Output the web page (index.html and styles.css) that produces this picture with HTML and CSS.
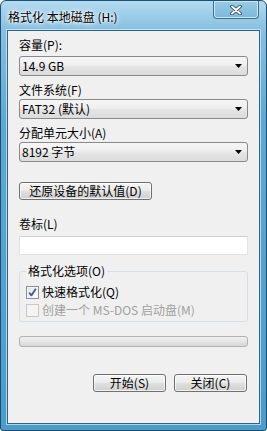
FILE: index.html
```html
<!DOCTYPE html>
<html lang="zh-CN">
<head>
<meta charset="utf-8">
<title>格式化 本地磁盘 (H:)</title>
<link rel="stylesheet" href="styles.css">
</head>
<body>
<div class="window">
  <div class="titlebar">
    <span class="title">格式化 本地磁盘 (H:)</span>
    <div class="close">
      <svg width="12" height="10" viewBox="0 0 12 10">
        <path d="M2 1.5 L10 8.5 M10 1.5 L2 8.5" stroke="#2b3f52" stroke-width="3.6" stroke-linecap="round"/>
        <path d="M2 1.5 L10 8.5 M10 1.5 L2 8.5" stroke="#ffffff" stroke-width="2" stroke-linecap="round"/>
      </svg>
    </div>
  </div>
  <div class="client">
    <div class="label">容量(P):</div>
    <div class="combo first"><span>14.9 GB</span><svg class="arrow" width="7" height="4" viewBox="0 0 7 4"><path d="M0 0 H7 L3.5 4 Z" fill="#000"/></svg></div>
    <div class="label">文件系统(F)</div>
    <div class="combo"><span>FAT32 (默认)</span><svg class="arrow" width="7" height="4" viewBox="0 0 7 4"><path d="M0 0 H7 L3.5 4 Z" fill="#000"/></svg></div>
    <div class="label">分配单元大小(A)</div>
    <div class="combo"><span>8192 字节</span><svg class="arrow" width="7" height="4" viewBox="0 0 7 4"><path d="M0 0 H7 L3.5 4 Z" fill="#000"/></svg></div>
    <div class="btn restore">还原设备的默认值(D)</div>
    <div class="label vol">卷标(L)</div>
    <div class="textbox"></div>
    <fieldset class="group">
      <legend>格式化选项(O)</legend>
      <div class="check-row first-row">
        <span class="box checked">
          <svg width="11" height="11" viewBox="0 0 11 11"><path d="M2.2 5.6 L4.4 8.4 L8.8 1.8" stroke="#3f5896" stroke-width="1.8" fill="none" stroke-linejoin="round"/></svg>
        </span>
        <span>快速格式化(Q)</span>
      </div>
      <div class="check-row disabled">
        <span class="box"></span>
        <span>创建一个 MS-DOS 启动盘(M)</span>
      </div>
    </fieldset>
    <div class="progress"></div>
    <div class="actions">
      <div class="btn action">开始(S)</div>
      <div class="btn action">关闭(C)</div>
    </div>
  </div>
</div>
</body>
</html>
```
FILE: styles.css
```css
* { box-sizing: border-box; }
body {
  margin: 0;
  font-family: "Noto Sans CJK SC", "Noto Sans", sans-serif;
  font-size: 12px;
  color: #000;
  background: #ffffff;
}
.window {
  width: 267px;
  height: 431px;
  border: 1px solid #1f4f70;
  border-radius: 6px 6px 3px 3px;
  background: linear-gradient(180deg, #b4dbf0 0px, #9ccde9 14px, #86bfe0 30px, #5ea8d3 120px, #4b9ccb 431px);
  display: flex;
  flex-direction: column;
  padding: 0 6px 6px;
}
.titlebar {
  height: 29px;
  display: flex;
  justify-content: space-between;
  align-items: flex-start;
  flex-shrink: 0;
}
.title {
  align-self: center;
  padding-left: 1px;
  line-height: 14px;
  margin-top: 2px;
  color: #000;
  text-shadow: 0 0 4px #ffffff, 0 0 6px #ffffff, 0 0 2px #ffffff;
}
.close {
  width: 46px;
  height: 18px;
  margin-right: 1px;
  border: 1px solid #3e6f8f;
  border-top: none;
  border-radius: 0 0 4px 4px;
  box-shadow: inset 0 0 0 1px #cbe6f5;
  background: linear-gradient(180deg, #9ccbe6, #7ab6da);
  display: flex;
  align-items: center;
  justify-content: center;
}
.client {
  flex: 1;
  background: #f0f0f0;
  border: 1px solid #2f6489;
  box-shadow: 0 0 0 1px rgba(220, 238, 248, 0.7);
  padding: 7px 11px 0 11px;
  display: flex;
  flex-direction: column;
}
.label {
  line-height: 14px;
  height: 14px;
  white-space: nowrap;
}
.combo {
  height: 20px;
  margin-top: 3px;
  margin-bottom: 7px;
  border: 1px solid #8a8a8a;
  border-radius: 3px;
  background: linear-gradient(180deg, #f6f6f6 0%, #efefef 45%, #e4e4e4 55%, #dcdcdc 100%);
  display: flex;
  align-items: center;
  justify-content: space-between;
  padding: 0 5px 0 2px;
  line-height: 14px;
  white-space: nowrap;
}
.combo.first { margin-top: 4px; }
.combo + .label + .combo { margin-top: 2px; }
.arrow { display: block; }
.btn {
  height: 18px;
  border: 1px solid #707070;
  border-radius: 3px;
  background: linear-gradient(180deg, #f4f4f4 0%, #ececec 45%, #dedede 55%, #d0d0d0 100%);
  box-shadow: inset 0 0 0 1px rgba(255, 255, 255, 0.7);
  display: flex;
  align-items: center;
  justify-content: center;
  line-height: 14px;
  white-space: nowrap;
}
.restore {
  width: 133px;
  margin-top: 13px;
}
.vol { margin-top: 17px; }
.textbox {
  height: 19px;
  margin-top: 5px;
  background: #ffffff;
  border: 1px solid #e2e3e5;
  border-top-color: #cfd1d4;
}
.group {
  margin: 9px 0 0 0;
  padding: 0 6px 4px 6px;
  border: 1px solid #d5dfe5;
  border-radius: 3px;
  min-width: 0;
}
.group legend {
  padding: 0 2px;
  line-height: 14px;
  white-space: nowrap;
}
.check-row {
  height: 14px;
  display: flex;
  align-items: center;
  gap: 3px;
  margin-top: 4px;
  line-height: 14px;
  white-space: nowrap;
}
.check-row.first-row { margin-top: 7px; }
.box {
  width: 13px;
  height: 13px;
  border: 1px solid #8f8f8f;
  background: linear-gradient(135deg, #e4e4e4, #ffffff);
  box-shadow: inset 0 0 0 1px #f4f4f4;
  display: flex;
  align-items: center;
  justify-content: center;
  flex-shrink: 0;
}
.check-row.disabled { color: #a0a0a0; }
.check-row.disabled .box {
  border-color: #c8c8c8;
  background: #f4f4f4;
  box-shadow: none;
}
.progress {
  height: 11px;
  margin-top: 14px;
  border: 1px solid #b2b2b2;
  border-radius: 3px;
  background: linear-gradient(180deg, #f0f0f0 0%, #e6e6e6 50%, #d6d6d6 100%);
}
.actions {
  display: flex;
  justify-content: flex-end;
  gap: 8px;
  margin-top: 27px;
  margin-right: 1px;
}
.action { width: 73px; }
```
